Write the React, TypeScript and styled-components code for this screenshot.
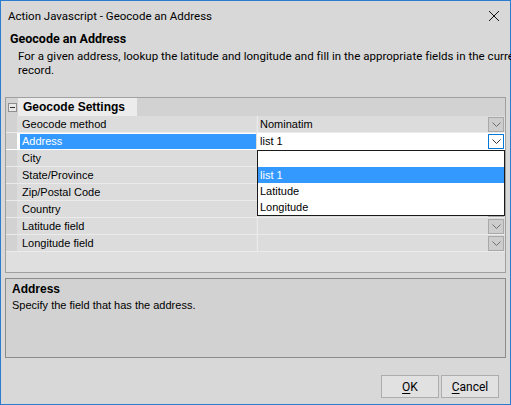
import React from "react";
import styled, { createGlobalStyle } from "styled-components";

const UI = `Roboto, "Noto Sans", sans-serif`;
const SANS = `"Liberation Sans", Arial, sans-serif`;

const GlobalStyle = createGlobalStyle`
  html, body { margin: 0; padding: 0; background: #d8d8d8; }
  *, *::before, *::after { box-sizing: border-box; }
`;

const Window = styled.div`
  position: relative;
  width: 511px;
  height: 405px;
  border: 1px solid #2b7bd1;
  background: #d8d8d8;
  display: flex;
  flex-direction: column;
  font-family: ${UI};
  color: #000;
`;

const TitleBar = styled.div`
  height: 29px;
  display: flex;
  align-items: center;
  justify-content: space-between;
  padding: 0 10px 0 7px;
  font-size: 11.5px;
`;

const CloseButton = styled.div`
  width: 12px;
  height: 12px;
  display: flex;
`;

const Header = styled.div`
  height: 67px;
  padding: 1px 0 0 9px;
`;

const Heading = styled.div`
  font-size: 12.5px;
  font-weight: bold;
  line-height: 16px;
`;

const Blurb = styled.div`
  margin-top: 2px;
  padding-left: 8px;
  font-size: 11.5px;
  letter-spacing: 0.03px;
  line-height: 14px;
  white-space: nowrap;
`;

const Grid = styled.div`
  margin: 0 4px;
  height: 176px;
  border: 1px solid #a0a0a0;
  background: #dfdfdf;
  font-family: ${SANS};
  font-size: 11px;
`;

const CategoryRow = styled.div`
  height: 18px;
  display: flex;
  align-items: stretch;
  background: #d2d2d2;
`;

const Toggle = styled.div`
  width: 11px;
  display: flex;
  align-items: center;
  justify-content: flex-end;
`;

const ToggleBox = styled.div`
  width: 9px;
  height: 9px;
  border: 1px solid #8f8f8f;
  background: #e8e8e8;
  display: flex;
  align-items: center;
  justify-content: center;
  &::after {
    content: "";
    width: 5px;
    height: 1px;
    background: #333;
  }
`;

const CategoryLabel = styled.div`
  margin-left: 1px;
  padding: 0 12px 0 5px;
  background: #ececec;
  font-size: 12px;
  font-weight: bold;
  line-height: 18px;
`;

const Row = styled.div<{ $selected?: boolean }>`
  height: 17px;
  display: flex;
  border-bottom: 1px solid ${(p) => (p.$selected ? "#ffffff" : "#ebebeb")};
`;

const Gutter = styled.div`
  width: 11px;
  flex: none;
  background: #d2d2d2;
`;

const Label = styled.div<{ $selected?: boolean }>`
  width: 239px;
  flex: none;
  padding-left: ${(p) => (p.$selected ? "2px" : "5px")};
  border-left: ${(p) => (p.$selected ? "3px solid #ffffff" : "0")};
  background: ${(p) => (p.$selected ? "#3399ff" : "#dcdcdc")};
  box-shadow: ${(p) => (p.$selected ? "inset 0 1px 0 #ffffff" : "none")};
  color: ${(p) => (p.$selected ? "#ffffff" : "#000000")};
  line-height: 16px;
  white-space: nowrap;
`;

const Value = styled.div<{ $selected?: boolean }>`
  flex: 1;
  display: flex;
  align-items: center;
  justify-content: space-between;
  margin-left: 1px;
  padding: 0 1px 0 2px;
  background: ${(p) => (p.$selected ? "#ffffff" : "#dcdcdc")};
  border-left: 1px solid ${(p) => (p.$selected ? "#ffffff" : "#ebebeb")};
  line-height: 16px;
`;

const DropButton = styled.div<{ $active?: boolean }>`
  width: 16px;
  height: 15px;
  display: flex;
  align-items: center;
  justify-content: center;
  border: 1px solid ${(p) => (p.$active ? "#0078d7" : "#a8a8a8")};
  background: ${(p) => (p.$active ? "#ffffff" : "#cdcdcd")};
`;

const Popup = styled.div`
  position: absolute;
  left: 256px;
  top: 149px;
  width: 248px;
  height: 66px;
  border: 1px solid #1a1a1a;
  background: #ffffff;
  font-family: ${SANS};
  font-size: 11px;
`;

const PopupItem = styled.div<{ $selected?: boolean }>`
  height: 16px;
  line-height: 16px;
  padding-left: 2px;
  background: ${(p) => (p.$selected ? "#3399ff" : "transparent")};
  color: ${(p) => (p.$selected ? "#ffffff" : "#000000")};
`;

const HelpPanel = styled.div`
  margin: 5px 4px 0;
  height: 80px;
  border: 1px solid #8c8c8c;
  background: #d2d2d2;
  padding: 2px 6px;
  font-family: ${SANS};
  font-size: 11px;
  line-height: 16px;
`;

const HelpTitle = styled.div`
  font-weight: bold;
  font-size: 12px;
`;

const Footer = styled.div`
  flex: 1;
  display: flex;
  justify-content: flex-end;
  align-items: flex-start;
  gap: 2px;
  padding: 17px 11px 0 0;
`;

const Button = styled.div`
  width: 58px;
  height: 23px;
  display: flex;
  align-items: center;
  justify-content: center;
  border: 1px solid #adadad;
  background: #e1e1e1;
  font-size: 12px;
  & u {
    text-decoration: underline;
    text-underline-offset: 2px;
  }
`;

const Chevron = ({ color }: { color: string }) => (
  <svg width="9" height="5" viewBox="0 0 9 5">
    <path d="M0.5 0.5 L4.5 4.5 L8.5 0.5" fill="none" stroke={color} strokeWidth="1" />
  </svg>
);

type Prop = { name: string; value?: string };

const props: Prop[] = [
  { name: "Geocode method", value: "Nominatim" },
  { name: "Address", value: "list 1" },
  { name: "City" },
  { name: "State/Province" },
  { name: "Zip/Postal Code" },
  { name: "Country" },
  { name: "Latitude field" },
  { name: "Longitude field" },
];

const selectedName = "Address";

export default function App() {
  return (
    <>
      <GlobalStyle />
      <Window>
        <TitleBar>
          <span>Action Javascript - Geocode an Address</span>
          <CloseButton>
            <svg width="12" height="12" viewBox="0 0 12 12">
              <path d="M1 1 L11 11 M11 1 L1 11" stroke="#111" strokeWidth="1" />
            </svg>
          </CloseButton>
        </TitleBar>
        <Header>
          <Heading>Geocode an Address</Heading>
          <Blurb>
            For a given address, lookup the latitude and longitude and fill in the appropriate fields in the current
            <br />
            record.
          </Blurb>
        </Header>
        <Grid>
          <CategoryRow>
            <Toggle>
              <ToggleBox />
            </Toggle>
            <CategoryLabel>Geocode Settings</CategoryLabel>
          </CategoryRow>
          {props.map((p) => {
            const sel = p.name === selectedName;
            return (
              <Row key={p.name} $selected={sel}>
                <Gutter />
                <Label $selected={sel}>{p.name}</Label>
                <Value $selected={sel}>
                  <span>{p.value ?? ""}</span>
                  <DropButton $active={sel}>
                    <Chevron color={sel ? "#333" : "#707070"} />
                  </DropButton>
                </Value>
              </Row>
            );
          })}
        </Grid>
        <HelpPanel>
          <HelpTitle>Address</HelpTitle>
          <div>Specify the field that has the address.</div>
        </HelpPanel>
        <Footer>
          <Button>
            <span>
              <u>O</u>K
            </span>
          </Button>
          <Button>
            <span>
              <u>C</u>ancel
            </span>
          </Button>
        </Footer>
        <Popup>
          <PopupItem>&nbsp;</PopupItem>
          <PopupItem $selected>list 1</PopupItem>
          <PopupItem>Latitude</PopupItem>
          <PopupItem>Longitude</PopupItem>
        </Popup>
      </Window>
    </>
  );
}
